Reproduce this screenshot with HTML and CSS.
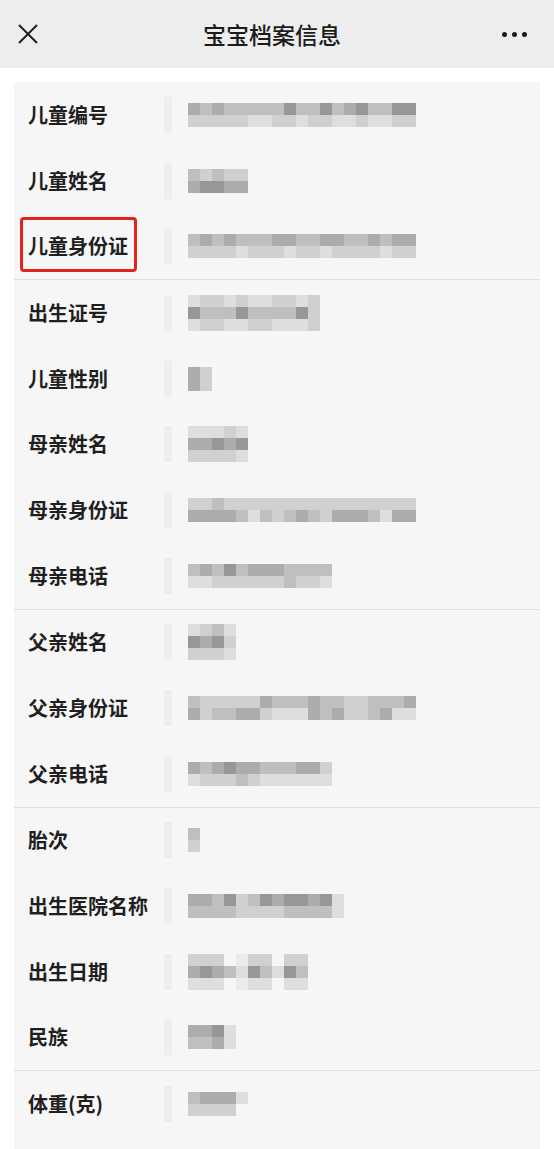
FILE: index.html
```html
<!DOCTYPE html>
<html lang="zh-CN">
<head>
    <meta charset="UTF-8">
    <meta name="viewport" content="width=device-width, initial-scale=1.0">
    <title>宝宝档案信息</title>
    <link rel="stylesheet" href="styles.css">
</head>
<body>

<div class="top-bar">
    <svg class="close-icon" viewBox="0 0 20 20" width="20" height="20">
        <path d="M1 1 L19 19 M19 1 L1 19" stroke="#1f1f1f" stroke-width="2" fill="none"/>
    </svg>
    <h1 class="page-title">宝宝档案信息</h1>
    <div class="more-icon"><i></i><i></i><i></i></div>
</div>

<div class="profile-card">
    <div class="group">
        <div class="row"><span class="label">儿童编号</span><div class="value"><div class="mosaic" data-m="5454444464464564466|3333322332332232233"></div></div></div>
        <div class="row"><span class="label">儿童姓名</span><div class="value"><div class="mosaic" data-m="43433|56655"></div></div></div>
        <div class="row"><span class="label"><span class="mark">儿童身份证</span></span><div class="value"><div class="mosaic" data-m="4545444554455445455|3333233323323333233"></div></div></div>
    </div>
    <div class="group">
        <div class="row"><span class="label">出生证号</span><div class="value"><div class="mosaic" data-m="23323223323|64446444463|23322332223"></div></div></div>
        <div class="row"><span class="label">儿童性别</span><div class="value"><div class="mosaic" data-m="53|53"></div></div></div>
        <div class="row"><span class="label">母亲姓名</span><div class="value"><div class="mosaic" data-m="22232|55656|33332"></div></div></div>
        <div class="row"><span class="label">母亲身份证</span><div class="value"><div class="mosaic" data-m="3343333333333333333|5555424345435554255"></div></div></div>
        <div class="row"><span class="label">母亲电话</span><div class="value"><div class="mosaic" data-m="454645554444|223333334332"></div></div></div>
    </div>
    <div class="group">
        <div class="row"><span class="label">父亲姓名</span><div class="value"><div class="mosaic" data-m="2342|6563|3332"></div></div></div>
        <div class="row"><span class="label">父亲身份证</span><div class="value"><div class="mosaic" data-m="4333335444544334445|5344553222545334522"></div></div></div>
        <div class="row"><span class="label">父亲电话</span><div class="value"><div class="mosaic" data-m="545655444553|233343222222"></div></div></div>
    </div>
    <div class="group">
        <div class="row"><span class="label">胎次</span><div class="value"><div class="mosaic" data-m="4|3"></div></div></div>
        <div class="row"><span class="label">出生医院名称</span><div class="value"><div class="mosaic" data-m="5546346566562|4444333344442"></div></div></div>
        <div class="row"><span class="label">出生日期</span><div class="value"><div class="mosaic" data-m="3330133033|5654264264|2220122022"></div></div></div>
        <div class="row"><span class="label">民族</span><div class="value"><div class="mosaic" data-m="5562|4452"></div></div></div>
    </div>
    <div class="group">
        <div class="row"><span class="label">体重(克)</span><div class="value"><div class="mosaic" data-m="45552|33330"></div></div></div>
    </div>
</div>

<script>
    document.addEventListener('DOMContentLoaded', () => {
        // values are hidden behind a pixel mosaic, drawn from the digit strings
        document.querySelectorAll('.mosaic').forEach(box => {
            box.dataset.m.split('|').forEach(line => {
                const row = document.createElement('div');
                row.className = 'mosaic-row';
                row.innerHTML = line.split('').map(d => `<i class="g${d}"></i>`).join('');
                box.appendChild(row);
            });
        });
    });
</script>

</body>
</html>
```

FILE: styles.css
```css
body {
    margin: 0;
    background: #fff;
    font-family: "Noto Sans CJK SC", "Noto Sans", sans-serif;
    color: #1f1f1f;
}
.top-bar {
    height: 68px;
    background: #ededed;
    display: flex;
    align-items: center;
    justify-content: space-between;
    padding: 0 27px 0 18px;
}
.close-icon {
    display: block;
    width: 20px;
    height: 20px;
}
.page-title {
    margin: 0 0 0 4px;
    font-size: 23px;
    font-weight: 500;
    color: #1b1b1b;
}
.more-icon {
    display: flex;
    gap: 5px;
    width: 25px;
}
.more-icon i {
    width: 5px;
    height: 5px;
    border-radius: 50%;
    background: #1b1b1b;
}
.profile-card {
    margin: 14px 14px 0;
    background: #f6f6f6;
    padding-bottom: 20px;
}
.group + .group {
    border-top: 1px solid #dedede;
}
.row {
    height: 65.7px;
    display: flex;
    align-items: center;
    padding-left: 14px;
}
.label {
    width: 136px;
    flex-shrink: 0;
    font-size: 20px;
    font-weight: 700;
    line-height: 24px;
    color: #1f1f1f;
}
.mark {
    position: relative;
}
.mark::after {
    content: '';
    position: absolute;
    left: -8px;
    right: -9px;
    top: -14px;
    bottom: -12px;
    border: 3px solid #e2241d;
    border-radius: 4px;
}
.value {
    display: flex;
    align-items: center;
}
.value::before {
    content: '';
    width: 8px;
    height: 36px;
    margin-right: 16px;
    background: #eeeeee;
}
.mosaic-row {
    display: flex;
}
.mosaic-row i {
    width: 12px;
    height: 12px;
}
.g0 { background: transparent; }
.g1 { background: #ebebeb; }
.g2 { background: #dedede; }
.g3 { background: #d0d0d0; }
.g4 { background: #bfbfbf; }
.g5 { background: #acacac; }
.g6 { background: #979797; }
```
